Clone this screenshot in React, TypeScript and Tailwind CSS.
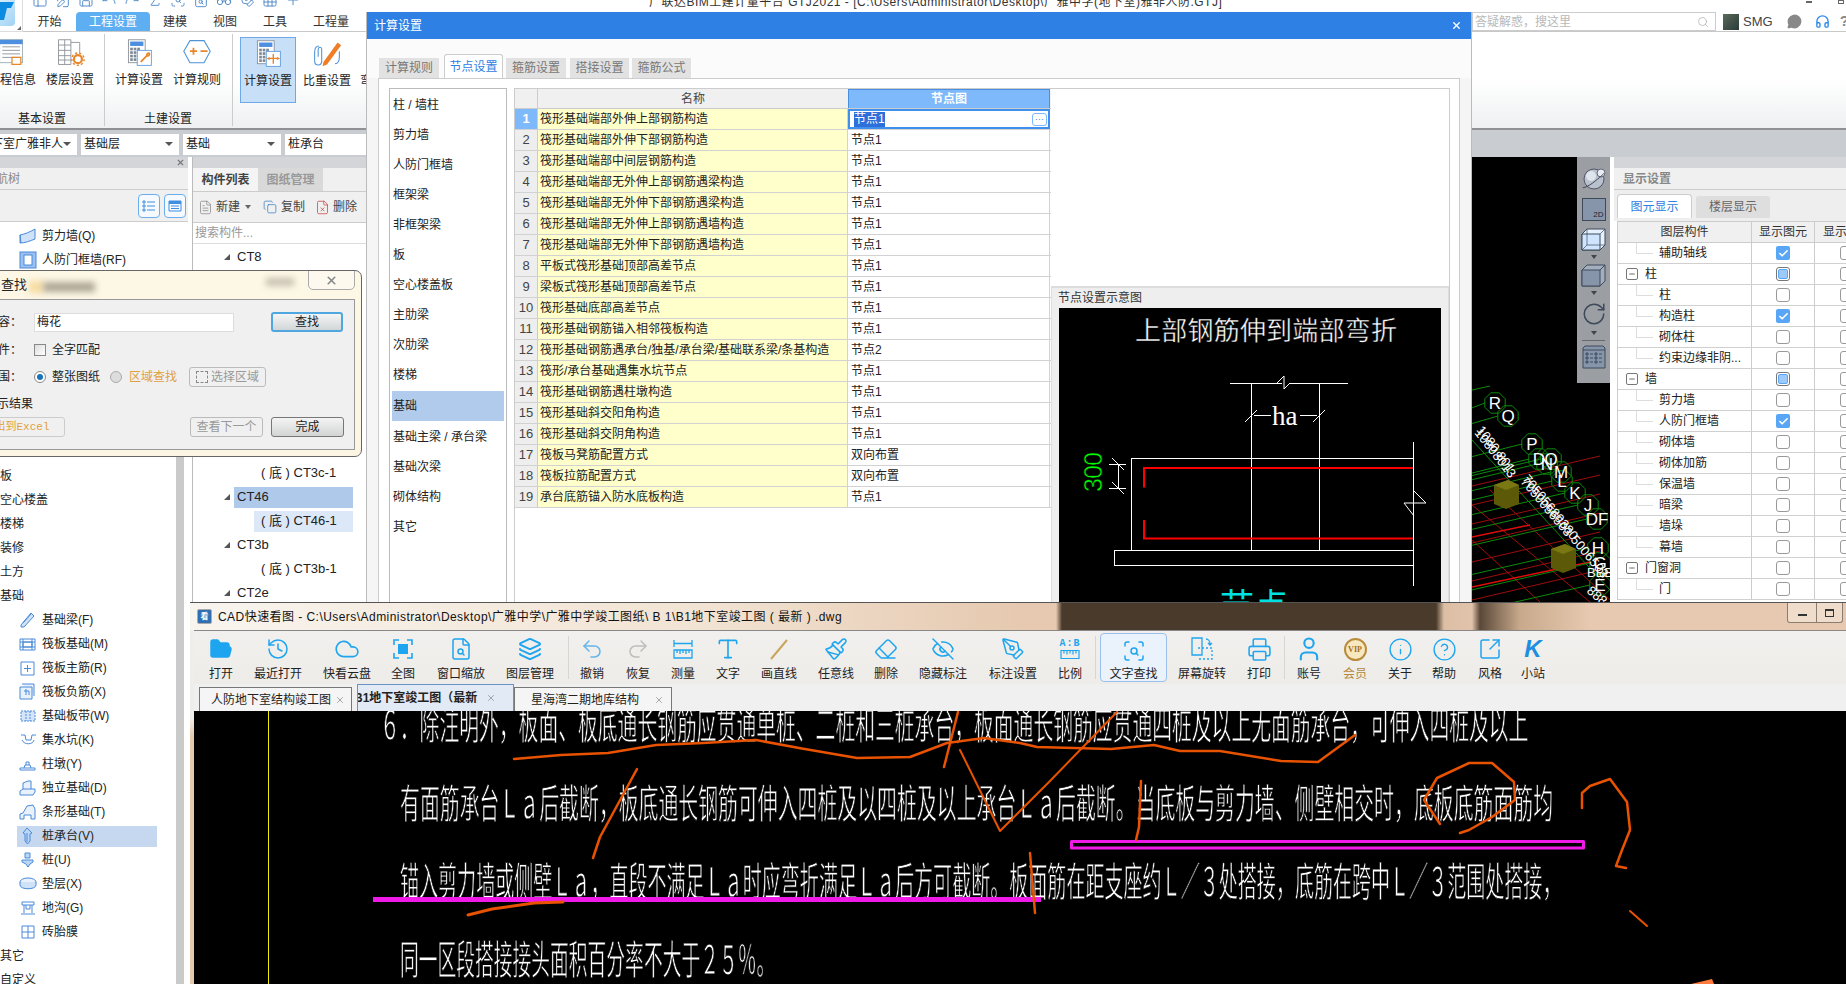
import React from "react";
import {
  FolderOpen, History, Cloud, FileSearch, Layers, Undo2, Redo2, Type, Paintbrush, Eraser, EyeOff, PenTool,
  RotateCw, Printer, User, Info, CircleHelp, SquareArrowOutUpRight, Search, MessageCircleMore, Headphones, Save,
  FilePen, Sigma, ScanSearch, Glasses, Grid3x3, X, FileText, Copy, FileX, Plus, Check, Minus, Table2, Undo, Redo,
} from "lucide-react";

const FONT = "font-['Liberation_Sans','Noto_Sans_CJK_SC',sans-serif]";

const QuickIcons = () => {
  const list = [Table2, FilePen, Save, Undo, Redo, Sigma, ScanSearch, FileSearch, Glasses, PenTool, Grid3x3, Plus];
  return (
    <div className="flex items-center gap-[7px] pl-[32px] -mt-[6px] h-[12px] text-[#4b87c5]">
      {list.map((I, i) => (
        <I key={i} size={16} strokeWidth={1.4} />
      ))}
    </div>
  );
};

const RibbonIcon = ({ kind }: { kind: string }) => {
  if (kind === "info")
    return (
      <svg width="30" height="30" viewBox="0 0 34 34">
        <rect x="3" y="2" width="26" height="26" fill="#fff" stroke="#9aa" />
        <rect x="3" y="2" width="26" height="5" fill="#4c8fe0" />
        {[10, 14, 18, 22].map((y) => <path key={y} d={`M6 ${y}H26`} stroke="#8a8f96" />)}
        <path d="M17 22h10v8h-10z" fill="#fff" stroke="#e8862c" strokeWidth="1.4" />
      </svg>
    );
  if (kind === "floor")
    return (
      <svg width="30" height="30" viewBox="0 0 34 34">
        <path d="M4 2H18V30H4Z M4 8H18 M4 14H18 M4 20H18 M4 25H18 M11 2V30 M18 5H28V17" fill="#fff" stroke="#8a8f96" />
        <circle cx="26" cy="24" r="4.5" fill="none" stroke="#e8862c" strokeWidth="2.5" />
        <circle cx="26" cy="24" r="7" fill="none" stroke="#e8862c" strokeWidth="1.6" strokeDasharray="2.4 2.4" />
      </svg>
    );
  if (kind === "calc" || kind === "calc2")
    return (
      <svg width="30" height="30" viewBox="0 0 34 34">
        <rect x="5" y="2" width="19" height="26" fill="#fff" stroke="#8a8f96" />
        <rect x="7" y="4" width="15" height="5" fill="#4c8fe0" />
        {[11, 15, 19, 23].map((y) => [7, 11, 15].map((x) => <rect key={`${x}${y}`} x={x} y={y} width="3" height="3" fill="#7d8894" />))}
        <rect x="15" y="14" width="16" height="17" fill="#fff" stroke="#5b9be0" />
        {kind === "calc" ? (
          <path d="M19 27l7-7m0 0c-1-2 2-4 3-2m-3 2c2 1 4-2 2-3" stroke="#e8862c" strokeWidth="2" fill="none" />
        ) : (
          <path d="M23 17v11M19 21l-2 1 2 1M27 21l2 1-2 1M19 22h8" stroke="#e8862c" strokeWidth="1.6" fill="none" />
        )}
      </svg>
    );
  if (kind === "rule")
    return (
      <svg width="30" height="30" viewBox="0 0 34 34">
        <path d="M9 3H25L32 15L25 28H9L2 15Z" fill="#fff" stroke="#4f93d8" strokeWidth="1.2" />
        <path d="M9 15h8M13 11v8M21 15h8" stroke="#e8862c" strokeWidth="2" />
      </svg>
    );
  return (
    <svg width="30" height="30" viewBox="0 0 34 34">
      <path d="M8 8C3 8 3 13 3 15V25C3 31 11 31 11 25V12C11 8 7 9 7 12V20" fill="none" stroke="#4f93d8" strokeWidth="1.2" />
      <path d="M26 28C30 28 31 24 31 20V14" fill="none" stroke="#4f93d8" strokeWidth="1.2" />
      <path d="M13 26L29 4L33 7L17 29L12 31Z" fill="#ee7d26" />
    </svg>
  );
};

const RibbonItem = ({ kind, label, w, active, pt = "pt-[3px]" }: { kind: string; label: string; w: string; active?: boolean; pt?: string }) => (
  <div className={`flex flex-col items-center h-[66px] shrink-0 ${pt} ${w} ${active ? "bg-[#c7dff7] border border-[#6ea8e8]" : "border border-transparent"}`}>
    <RibbonIcon kind={kind} />
    <span className="mt-[4px] whitespace-nowrap text-[12px] leading-[16px] text-[#222]">{label}</span>
  </div>
);

const Select = ({ text, w, caret = true }: { text: string; w: string; caret?: boolean }) => (
  <div className={`h-[21px] bg-white flex items-center justify-between pl-[3px] pr-[6px] text-[12px] text-[#222] overflow-hidden whitespace-nowrap shrink-0 ${w}`}>
    <span>{text}</span>
    {caret && <span className="w-0 h-0 border-x-[4px] border-x-transparent border-t-[4px] border-t-[#555]" />}
  </div>
);

const Logo = () => (
  <div className="absolute left-0 top-0 w-[23px] h-[32px] border-r border-b border-[#ddd] bg-white z-10">
    <div className="w-[15px] h-[26px] rounded-br-[4px] bg-[linear-gradient(135deg,#d6ecfb,#9fd3f5)] flex items-start overflow-hidden">
      <svg width="15" height="24" viewBox="0 0 15 24"><path d="M0 2H14L11 8H7L4 20H0Z" fill="#0d8be0" /></svg>
    </div>
    <span className="absolute right-[1px] bottom-[1px] w-0 h-0 border-l-[4px] border-l-transparent border-b-[4px] border-b-[#666]" />
  </div>
);

const Top = () => (
  <div className="relative h-[130px] shrink-0 bg-white">
    <Logo />
    <div className="h-[12px] overflow-hidden flex">
      <QuickIcons />
      <div className="absolute left-[649px] top-[-6px] text-[12px] leading-[16px] whitespace-nowrap text-[#333] tracking-[0.5px]">
        广联达BIM土建计量平台 GTJ2021 - [C:\Users\Administrator\Desktop\广雅中学(地下室)雅非人防.GTJ]
      </div>
      <div className="ml-auto flex gap-[26px] pr-[2px] items-start">
        <span className="w-[6px] h-[2px] mt-[1px] bg-[#666]" />
        <span className="w-[6px] h-[4px] border border-[#666]" />
      </div>
    </div>
    <div className="flex h-[20px] border-b border-[#c8c8c8] pl-[23px] text-[12px] text-[#333]">
      {[
        ["开始", "w-[53px]"],
        ["工程设置", "w-[74px] bg-[#5eaef2] text-white rounded-t-[4px]"],
        ["建模", "w-[50px]"],
        ["视图", "w-[50px]"],
        ["工具", "w-[50px]"],
        ["工程量", "w-[62px]"],
      ].map(([t, c]) => (
        <div key={t} className={`flex items-center justify-center ${c}`}>{t}</div>
      ))}
      <div className="flex-1" />
      <div className="flex items-center h-[19px] -mt-[1px] w-[244px] absolute left-[1472px] top-[13px] border border-[#ccc] bg-white pl-[2px] pr-[6px] text-[12px] text-[#b8b8b8] justify-between">
        <span>答疑解惑，搜这里</span>
        <Search size={12} strokeWidth={1.4} className="text-[#aaa]" />
      </div>
      <div className="absolute left-[1723px] top-[13px] flex items-center h-[17px] text-[13px] text-[#444]">
        <span className="w-[16px] h-[16px] bg-[linear-gradient(135deg,#5a6a5a,#2a3a3a)] mr-[4px]" />
        SMG
        <MessageCircleMore size={15} strokeWidth={2} fill="#888" className="ml-[14px] text-[#888]" />
        <Headphones size={15} strokeWidth={2.2} className="ml-[13px] text-[#2d8ae8]" />
        <span className="ml-[10px] text-[15px] font-bold text-[#888]">?</span>
      </div>
    </div>
    <div className="h-[98px] bg-[linear-gradient(180deg,#fff_0%,#fff_50%,#eef0f1_100%)] border-b-2 border-[#8e9093] flex -ml-[20px] overflow-hidden">
      <div className="w-[125px] shrink-0 border-r border-[#ccc] flex flex-col my-[2px]">
        <div className="flex h-[68px] items-start">
          <RibbonItem kind="info" label="工程信息" w="w-[64px]" />
          <RibbonItem kind="floor" label="楼层设置" w="w-[52px]" />
        </div>
        <div className="text-[12px] text-[#222] text-center mt-[10px]">基本设置</div>
      </div>
      <div className="w-[128px] shrink-0 border-r border-[#ccc] flex flex-col my-[2px] pl-[8px]">
        <div className="flex h-[68px] gap-[6px]">
          <RibbonItem kind="calc" label="计算设置" w="w-[52px]" />
          <RibbonItem kind="rule" label="计算规则" w="w-[52px]" />
        </div>
        <div className="text-[12px] text-[#222] text-center pr-[9px] mt-[10px]">土建设置</div>
      </div>
      <div className="flex mt-[5px] pl-[7px] gap-[5px]">
        <RibbonItem kind="calc2" label="计算设置" w="w-[56px]" pt="pt-[1px]" active />
        <RibbonItem kind="pen" label="比重设置" w="w-[52px]" pt="pt-[1px]" />
        <RibbonItem kind="pen" label="弯钩设置" w="w-[52px]" pt="pt-[1px]" />
      </div>
    </div>
  </div>
);

const SelectorBar = () => (
  <div className="h-[27px] shrink-0 bg-[#c9ccd0] flex items-center gap-[4px] pt-[1px]">
    <Select text="下室广雅非人" w="w-[77px] justify-end" />
    <Select text="基础层" w="w-[98px]" />
    <Select text="基础" w="w-[98px]" />
    <Select text="桩承台" w="w-[120px]" caret={false} />
  </div>
);

const LeftIcon = ({ n }: { n: number }) => {
  const s = "#4a8ad8";
  const p: Record<number, React.ReactNode> = {
    0: <path d="M2 14L12 2l3 3L5 16H2Z M4 12l8-9" fill="#cfe2f8" stroke={s} />,
    1: <path d="M1 4h15v11H1Z M4 7h9v5H4Z M4 4v11 M13 4v11 M1 7h15 M1 12h15" fill="none" stroke={s} />,
    2: <path d="M2 3h13v13H2Z M8.5 6v7 M5 9.5h7" fill="none" stroke={s} />,
    3: <path d="M1 4h12v12H1Z M3 1h12v12 M5 8h5v4 M7 6v6" fill="#e8f1fc" stroke={s} />,
    4: <path d="M2 4h14v10H2Z M7 4v10 M11 4v10" fill="#d5e5f8" stroke={s} strokeDasharray="2 1" />,
    5: <path d="M2 4l4 0 1 5h5l1-5h4 M3 9c2 5 11 5 12 0" fill="none" stroke={s} />,
    6: <path d="M1 13h15v2H1Z M5 13l1-3h5l1 3 M7 10V7h3v3" fill="none" stroke={s} />,
    7: <path d="M1 16V12l3-2V4l5-2h3v8h4v3l-2 3Z M4 10h8" fill="#e8f1fc" stroke={s} />,
    8: <path d="M1 16v-5l3-1L8 3l6-1 2 4v10H12v-4H5v4Z" fill="#e8f1fc" stroke={s} />,
    9: <path d="M8 1l5 5-2 1v7l-2.500 3L6 14V7L4 6Z M8 6v9" fill="#bcd6f5" stroke={s} />,
    10: <path d="M6 2h5v5H6Z M3 9h11v2l-3 2-2 3-2-3-4-2Z" fill="#bcd6f5" stroke={s} />,
    11: <><ellipse cx="9" cy="7" rx="8" ry="4" fill="#e8f1fc" stroke={s} /><path d="M1 7v3c0 5 16 5 16 0V7" fill="#cfe2f8" stroke={s} /></>,
    12: <path d="M3 3h12v3H3Z M5 6v8 M13 6v8 M2 15h14 M7 6v4h4V6" fill="none" stroke={s} />,
    13: <path d="M3 3h12v12H3Z M9 3v12 M3 9h12" fill="none" stroke={s} />,
    14: <path d="M1 8C6 7 11 5 16 2v10C11 14 6 16 1 16Z M1 8l1 8" fill="#cfe2f8" stroke={s} />,
    15: <><rect x="1" y="1" width="16" height="16" fill="#9ac1ef" stroke={s} /><rect x="5" y="4" width="8" height="10" fill="#fff" stroke={s} /></>,
  };
  return <svg width="18" height="18" viewBox="0 0 18 18" className="shrink-0">{p[n]}</svg>;
};

const LeftRow = ({ t, icon, sel, plain }: { t: string; icon?: number; sel?: boolean; plain?: boolean }) => (
  <div className="h-[24px] flex items-center whitespace-nowrap text-[12px] text-[#222]">
    {plain ? (
      <span>{t}</span>
    ) : (
      <div className={`ml-[17px] w-[140px] h-[21px] flex items-center pl-[2px] ${sel ? "bg-[#c6d8f0]" : ""}`}>
        <span className="w-[23px] flex">{icon !== undefined && <LeftIcon n={icon} />}</span>
        <span>{t}</span>
      </div>
    )}
  </div>
);

const LeftPanel = () => (
  <div className="w-[188px] shrink-0 flex flex-col bg-white">
    <div className="h-[11px] bg-[#d3d5d9] flex justify-end items-center pr-[3px]"><X size={9} strokeWidth={3} className="text-[#777]" /></div>
    <div className="h-[22px] bg-[#f0f0f0] border-b border-[#ccc] text-[12px] text-[#888] flex items-center -ml-[4px] whitespace-nowrap">航树</div>
    <div className="h-[32px] bg-[#f0f0f0] border-b border-[#ccc] flex justify-end items-center gap-[4px] pr-[2px]">
      <div className="w-[22px] h-[24px] border border-[#6aaeee] rounded-[4px] bg-[#f6fafe] flex items-center justify-center">
        <svg width="14" height="14" viewBox="0 0 14 14"><path d="M1 2h2v2H1Z M1 6h2v2H1Z M1 10h2v2H1Z M5 3h8 M5 7h8 M5 11h8" fill="none" stroke="#3f8fe0" /></svg>
      </div>
      <div className="w-[22px] h-[24px] border border-[#6aaeee] rounded-[4px] bg-[#f6fafe] flex items-center justify-center">
        <svg width="14" height="14" viewBox="0 0 14 14"><path d="M1 2h12v10H1Z" fill="none" stroke="#3f8fe0" /><path d="M1 2h12v3H1Z" fill="#3f8fe0" /><path d="M3 7h8 M3 9.500h8" stroke="#3f8fe0" /></svg>
      </div>
    </div>
    <div className="flex-1 relative overflow-hidden">
      <div className="pr-[12px] pt-[2px]">
        <LeftRow t="剪力墙(Q)" icon={14} />
        <LeftRow t="人防门框墙(RF)" icon={15} />
        {[0, 1, 2, 3, 4, 5, 6, 7].map((i) => <div key={i} className="h-[24px]" />)}
        <LeftRow t="板" plain />
        <LeftRow t="空心楼盖" plain />
        <LeftRow t="楼梯" plain />
        <LeftRow t="装修" plain />
        <LeftRow t="土方" plain />
        <LeftRow t="基础" plain />
        <LeftRow t="基础梁(F)" icon={0} />
        <LeftRow t="筏板基础(M)" icon={1} />
        <LeftRow t="筏板主筋(R)" icon={2} />
        <LeftRow t="筏板负筋(X)" icon={3} />
        <LeftRow t="基础板带(W)" icon={4} />
        <LeftRow t="集水坑(K)" icon={5} />
        <LeftRow t="柱墩(Y)" icon={6} />
        <LeftRow t="独立基础(D)" icon={7} />
        <LeftRow t="条形基础(T)" icon={8} />
        <LeftRow t="桩承台(V)" icon={9} sel />
        <LeftRow t="桩(U)" icon={10} />
        <LeftRow t="垫层(X)" icon={11} />
        <LeftRow t="地沟(G)" icon={12} />
        <LeftRow t="砖胎膜" icon={13} />
        <LeftRow t="其它" plain />
        <LeftRow t="自定义" plain />
      </div>
      <div className="absolute right-[4px] top-[225px] bottom-0 w-[8px] bg-[#cacaca]" />
    </div>
  </div>
);

const TreeRow = ({ t, child, sel }: { t: string; child?: boolean; sel?: boolean }) => (
  <div className="h-[24px] flex items-center whitespace-nowrap text-[12px] text-[#222]">
    {child ? (
      <div className={`ml-[61px] w-[99px] h-[21px] flex items-center pl-[7px] text-[13px] ${sel ? "bg-[#dce7f7]" : ""}`}>{t}</div>
    ) : (
      <>
        <span className="ml-[31px] w-[10px] flex items-center">
          <span className="w-0 h-0 border-l-[6px] border-l-transparent border-b-[6px] border-b-[#555]" />
        </span>
        <div className={`w-[119px] h-[21px] flex items-center pl-[3px] text-[13px] ${sel ? "bg-[#afc9ea]" : ""}`}>{t}</div>
      </>
    )}
  </div>
);

const MidPanel = () => (
  <div className="w-[186px] shrink-0 flex flex-col bg-white border-l border-[#bbb]">
    <div className="h-[11px] bg-[#d3d5d9]" />
    <div className="h-[24px] bg-[#f0f0f0] border-b border-[#ccc] flex text-[12px]">
      <div className="w-[65px] bg-[#f4f4f4] flex items-center justify-center font-bold text-[#444]">构件列表</div>
      <div className="w-[65px] bg-[#d9d9d9] flex items-center justify-center font-bold text-[#999]">图纸管理</div>
    </div>
    <div className="h-[31px] bg-[#f0f0f0] border-b border-[#ccc] flex items-center text-[12px] text-[#444] pl-[5px]">
      <FileText size={15} strokeWidth={1.2} className="text-[#888]" /><span className="ml-[3px]">新建</span>
      <span className="ml-[5px] w-0 h-0 border-x-[3px] border-x-transparent border-t-[4px] border-t-[#666]" />
      <Copy size={14} strokeWidth={1.3} className="ml-[12px] text-[#3f7fc8]" /><span className="ml-[4px]">复制</span>
      <FileX size={15} strokeWidth={1.2} className="ml-[10px] text-[#c84040]" /><span className="ml-[3px]">删除</span>
    </div>
    <div className="h-[21px] border-b border-[#ddd] pl-[2px] flex items-center text-[12px] text-[#999]">搜索构件...</div>
    <div className="pt-[1px]">
      <TreeRow t="CT8" />
      {[0, 1, 2, 3, 4, 5, 6, 7].map((i) => <div key={i} className="h-[24px]" />)}
      <TreeRow t="( 底 ) CT3c-1" child />
      <TreeRow t="CT46" sel />
      <TreeRow t="( 底 ) CT46-1" child sel />
      <TreeRow t="CT3b" />
      <TreeRow t="( 底 ) CT3b-1" child />
      <TreeRow t="CT2e" />
    </div>
  </div>
);

const FindDialog = () => (
  <div className="absolute left-[-40px] top-[270px] w-[402px] h-[187px] border border-[#666] rounded-[7px] bg-[linear-gradient(180deg,#fdf7e6,#fcf5e3)] overflow-hidden text-[12px] text-[#222] flex flex-col">
    <div className="h-[28px] shrink-0 relative flex items-center pl-[40px] text-[13px]">
      查找
      <span className="absolute left-[68px] top-[10px] w-[14px] h-[12px] bg-[#f8dca0] blur-[3px]" />
      <span className="absolute left-[82px] top-[11px] w-[52px] h-[10px] bg-[#b0a896] blur-[3px]" />
      <span className="absolute left-[305px] top-[7px] w-[28px] h-[8px] bg-[#c8c0b0] blur-[3px]" />
      <div className="absolute right-[6px] top-[-1px] w-[47px] h-[20px] border border-[#aaa] rounded-b-[5px] bg-[#fdf9ee] flex items-center justify-center">
        <X size={13} strokeWidth={3} className="text-[#888]" />
      </div>
    </div>
    <div className="ml-[0px] mr-[6px] h-[151px] border border-[#999] bg-[#f0f0f0] relative pl-[72px] pt-[12px]">
      <div className="flex h-[20px] items-center">
        <span className="absolute left-[10px] w-[50px] text-right whitespace-nowrap">内容：</span>
        <div className="w-[200px] h-[19px] border border-[#ddd] bg-white pl-[2px] flex items-center">梅花</div>
        <div className="ml-[37px] w-[72px] h-[20px] border-2 border-[#4ea7df] rounded-[3px] bg-[linear-gradient(180deg,#f4f4f4,#d2d6d8)] flex items-center justify-center">查找</div>
      </div>
      <div className="flex h-[20px] items-center mt-[8px]">
        <span className="absolute left-[10px] w-[50px] text-right whitespace-nowrap">条件：</span>
        <span className="w-[12px] h-[12px] border border-[#888] bg-[linear-gradient(135deg,#ddd,#fff)]" />
        <span className="ml-[6px]">全字匹配</span>
      </div>
      <div className="flex h-[20px] items-center mt-[7px]">
        <span className="absolute left-[10px] w-[50px] text-right whitespace-nowrap">范围：</span>
        <span className="w-[12px] h-[12px] rounded-full border border-[#888] bg-white flex items-center justify-center"><span className="w-[6px] h-[6px] rounded-full bg-[#1874b8]" /></span>
        <span className="ml-[6px]">整张图纸</span>
        <span className="ml-[10px] w-[12px] h-[12px] rounded-full border border-[#aaa] bg-[#ddd]" />
        <span className="ml-[7px] text-[#e0a040]">区域查找</span>
        <div className="ml-[12px] w-[77px] h-[20px] border border-[#bbb] rounded-[3px] flex items-center justify-center text-[#999]">
          <span className="w-[12px] h-[12px] border border-dashed border-[#888] mr-[3px]" />选择区域
        </div>
      </div>
      <div className="absolute left-[23px] top-[95px] whitespace-nowrap">显示结果</div>
      <div className="absolute left-[0px] top-[117px] w-[103px] h-[20px] border border-[#ccc] rounded-[3px] flex items-center justify-center font-['Liberation_Mono','Noto_Sans_CJK_SC',monospace] text-[#e0a040] text-[11px] pl-[6px]">导出到Excel</div>
      <div className="absolute left-[228px] top-[117px] w-[73px] h-[20px] border border-[#bbb] rounded-[3px] flex items-center justify-center text-[#999]">查看下一个</div>
      <div className="absolute left-[309px] top-[117px] w-[73px] h-[20px] border border-[#777] rounded-[3px] bg-[linear-gradient(180deg,#f4f4f4,#d2d4d4)] flex items-center justify-center">完成</div>
    </div>
  </div>
);

const listItems = ["柱 / 墙柱", "剪力墙", "人防门框墙", "框架梁", "非框架梁", "板", "空心楼盖板", "主肋梁", "次肋梁", "楼梯", "基础", "基础主梁 / 承台梁", "基础次梁", "砌体结构", "其它"];

const rows: [string, string][] = [
  ["筏形基础端部外伸上部钢筋构造", "节点1"],
  ["筏形基础端部外伸下部钢筋构造", "节点1"],
  ["筏形基础端部中间层钢筋构造", "节点1"],
  ["筏形基础端部无外伸上部钢筋遇梁构造", "节点1"],
  ["筏形基础端部无外伸下部钢筋遇梁构造", "节点1"],
  ["筏形基础端部无外伸上部钢筋遇墙构造", "节点1"],
  ["筏形基础端部无外伸下部钢筋遇墙构造", "节点1"],
  ["平板式筏形基础顶部高差节点", "节点1"],
  ["梁板式筏形基础顶部高差节点", "节点1"],
  ["筏形基础底部高差节点", "节点1"],
  ["筏形基础钢筋锚入相邻筏板构造", "节点1"],
  ["筏形基础钢筋遇承台/独基/承台梁/基础联系梁/条基构造", "节点2"],
  ["筏形/承台基础遇集水坑节点", "节点1"],
  ["筏形基础钢筋遇柱墩构造", "节点1"],
  ["筏形基础斜交阳角构造", "节点1"],
  ["筏形基础斜交阴角构造", "节点1"],
  ["筏板马凳筋配置方式", "双向布置"],
  ["筏板拉筋配置方式", "双向布置"],
  ["承台底筋锚入防水底板构造", "节点1"],
];

const NodeTable = () => (
  <div className="w-[536px] shrink-0 text-[12px] text-[#222]">
    <div className="grid grid-cols-[23px_310px_202px] h-[20px] border-b border-[#ccc] bg-[#f0f0f0] text-[#444]">
      <div className="border-r border-[#ccc]" />
      <div className="flex items-center justify-center">名称</div>
      <div className="flex items-center justify-center bg-[#7db9fb] text-white border border-[#4b8fe0] border-b-0 font-bold">节点图</div>
    </div>
    {rows.map(([a, b], i) => (
      <div key={i} className="grid grid-cols-[23px_310px_202px] h-[21px] border-b border-[#d2d2d2]">
        <div className={`flex items-center justify-center border-r border-[#ccc] text-[13px] ${i === 0 ? "bg-[#7db9fb] text-white font-bold" : "bg-[#eeeeee] text-[#444]"}`}>{i + 1}</div>
        <div className="bg-[#ffffcc] border-r border-[#d2d2d2] flex items-center pl-[2px] whitespace-nowrap overflow-hidden">{a}</div>
        {i === 0 ? (
          <div className="border-2 border-[#3f8fef] flex items-center justify-between pl-[4px] pr-[1px]">
            <span className="bg-[#2e6fd9] text-white leading-[15px]">{b}</span>
            <span className="w-[15px] h-[13px] border border-[#7db9fb] rounded-[3px] flex items-center justify-center text-[#3f7fc8] text-[9px] leading-none">···</span>
          </div>
        ) : (
          <div className="border-r border-[#d2d2d2] flex items-center pl-[3px]">{b}</div>
        )}
      </div>
    ))}
  </div>
);

const NodeDiagram = () => (
  <svg viewBox="1059 308 382 294" className="w-[382px] h-[294px] bg-black block shrink-0">
    <g stroke="#fff" strokeWidth="1" fill="none" shapeRendering="crispEdges">
      <path d="M1230 383.500H1282M1289 383.500H1348 M1251.500 383V550 M1319.500 383V550" />
      <path d="M1131.500 458.500H1413.500V550H1131.500Z M1114.500 550.500H1413.500V565.500H1114.500Z M1413.500 442V586" />
      <path d="M1254 415.500H1271 M1300 415.500H1317" />
      <path d="M1109 464.500H1126 M1109 488.500H1126 M1118.500 464V488" />
    </g>
    <g stroke="#fff" strokeWidth="1" fill="none">
      <path d="M1277 383L1284 376 L1284 389 L1290 383 M1245 422L1257 410 M1313 422L1325 410 M1112 458L1124 470 M1112 482L1124 494 M1404 503H1414L1426 503 L1414 491 M1404 503L1414 516" />
    </g>
    <path d="M1144 487.500V468H1413 M1144 520V538.500H1413" stroke="#f00" strokeWidth="2" fill="none" />
    <text x="1135" y="340" fill="#fff" stroke="#000" strokeWidth="0.4" fontSize="26" fontFamily="'Noto Sans CJK SC',sans-serif" textLength="262">上部钢筋伸到端部弯折</text>
    <text x="1272" y="425" fill="#fff" fontSize="27" fontFamily="'Liberation Serif',serif">ha</text>
    <text transform="translate(1102 492) rotate(-90)" fill="#00ff00" stroke="#000" strokeWidth="0.5" fontSize="25" fontFamily="'Liberation Sans',sans-serif" textLength="40">300</text>
    <text x="1220" y="618" fill="#00e0e0" fontSize="34" fontFamily="'Noto Sans CJK SC',sans-serif">节点</text>
  </svg>
);

const CalcDialog = () => (
  <div className="absolute left-[366px] top-[12px] w-[1106px] h-[590px] bg-[#f5f5f5] border-x border-[#bbb] flex flex-col">
    <div className="h-[27px] shrink-0 bg-[#2f80e4] text-white text-[12px] flex items-center justify-between pl-[7px] pr-[9px]">
      <span>计算设置</span>
      <X size={11} strokeWidth={3} />
    </div>
    <div className="h-[15px] shrink-0 bg-[#fbfbfb]" />
    <div className="h-[24px] shrink-0 flex items-end pl-[12px] bg-[#fbfbfb] text-[12px] text-[#777]">
      <div className="w-[60px] h-[20px] bg-[#e2e2e2] flex items-center justify-center">计算规则</div>
      <div className="ml-[5px] w-[59px] h-[24px] bg-white border border-b-0 border-[#ccc] rounded-t-[3px] text-[#2f80e4] flex items-center justify-center">节点设置</div>
      <div className="ml-[3px] w-[60px] h-[20px] bg-[#e2e2e2] flex items-center justify-center">箍筋设置</div>
      <div className="ml-[4px] w-[59px] h-[20px] bg-[#e2e2e2] flex items-center justify-center">搭接设置</div>
      <div className="ml-[3px] w-[59px] h-[20px] bg-[#e2e2e2] flex items-center justify-center">箍筋公式</div>
    </div>
    <div className="ml-[11px] mr-[11px] flex-1 bg-white border border-b-0 border-[#ccc] flex pl-[10px] pt-[9px] pr-[9px] gap-[7px] min-h-0">
      <div className="w-[118px] shrink-0 border border-[#bbb] border-b-0 pt-[1px] px-[2px] text-[12px] text-[#222]">
        {listItems.map((t) => (
          <div key={t} className={`h-[30px] flex items-center pl-[1px] whitespace-nowrap ${t === "基础" ? "bg-[#b0cbeb] h-[28px] my-[1px]" : ""}`}>{t}</div>
        ))}
      </div>
      <div className="flex-1 border border-[#ccc] border-b-0 flex min-w-0">
        <NodeTable />
        <div className="flex-1 flex flex-col min-w-0">
          <div className="h-[197px] shrink-0" />
          <div className="flex-1 bg-[#eeeeee] border-t-2 border-x border-[#ddd] pl-[7px] overflow-hidden">
            <div className="h-[20px] text-[12px] text-[#333] flex items-center -ml-[1px]">节点设置示意图</div>
            <NodeDiagram />
          </div>
        </div>
      </div>
    </div>
  </div>
);

const Octa = ({ x, y, r = 11 }: { x: number; y: number; r?: number }) => {
  const pts = Array.from({ length: 8 }, (_, i) => {
    const a = ((i + 0.5) * Math.PI) / 4;
    return `${(x + r * Math.cos(a)).toFixed(1)},${(y + r * Math.sin(a)).toFixed(1)}`;
  }).join(" ");
  return <polygon points={pts} fill="none" stroke="#0c8a0c" strokeWidth="1" />;
};

const axis: [string, number, number][] = [
  ["R", 1495, 403], ["Q", 1508, 416], ["P", 1532, 444], ["D", 1539, 459], ["O", 1551, 459], ["N", 1547, 464], ["M", 1561, 472], ["L", 1562, 481],
  ["K", 1575, 493], ["J", 1588, 505], ["DF", 1597, 519], ["H", 1598, 548], ["G", 1600, 563], ["E", 1600, 585],
];

const Canvas3D = () => (
  <svg viewBox="1472 383 138 219" className="absolute left-0 top-[226px] w-[138px] h-[219px]">
    <g stroke="#a00c0c" strokeWidth="1">
      {[0, 1, 2, 3, 4, 5, 6].map((i) => <line key={i} x1="1472" y1={486 + i * 19} x2="1600" y2={456 + i * 19} />)}
      <path d="M1490 490L1610 600 M1472 505L1590 602 M1472 540L1540 602" fill="none" />
    </g>
    <g stroke="#e00c0c" strokeWidth="1.500"><path d="M1472 537L1530 525 M1472 587L1590 562" /></g>
    <g stroke="#0c8a0c" strokeWidth="1">
      {axis.map(([n, x, y]) => <line key={n + x} x1={1472} y1={y + (x - 1472) * 0.21} x2={x - 10} y2={y} />)}
      <path d="M1472 390L1490 386 M1472 440L1610 590" fill="none" />
    </g>
    {axis.map(([n, x, y]) => <Octa key={n + "o"} x={x} y={y} />)}
    <g fill="#fff" fontSize="17" fontFamily="'Liberation Sans',sans-serif">
      {axis.map(([n, x, y]) => <text key={n + "t"} x={x} y={y + 6} textAnchor="middle">{n}</text>)}
    </g>
    <g fill="#fff" fontSize="13" fontFamily="'Liberation Sans',sans-serif">
      <text transform="translate(1474 433) rotate(52)">10808013</text>
      <text transform="translate(1476 430) rotate(53)">1080 801</text>
      <text transform="translate(1520 482) rotate(50)">7050056503</text>
      <text transform="translate(1522 479) rotate(51)">70505680380</text>
      <text transform="translate(1570 540) rotate(50)">5006503</text>
      <text transform="translate(1587 577)">BBB</text>
      <text transform="translate(1586 592) rotate(40)">888</text>
    </g>
    <g>
      <path d="M1494 485l14-5 11 5v19l-13 5-12-5Z" fill="#5c5a08" />
      <path d="M1494 485l14-5 11 5-13 5Z" fill="#7a7812" />
      <path d="M1551 549l14-5 11 5v19l-13 5-12-5Z" fill="#5c5a08" />
      <path d="M1551 549l14-5 11 5-13 5Z" fill="#7a7812" />
    </g>
  </svg>
);

const ToolBtn = ({ children }: { children: React.ReactNode }) => <div className="flex justify-center">{children}</div>;
const Caret = () => <span className="w-0 h-0 mx-auto my-[3px] border-x-[3px] border-x-transparent border-t-[4px] border-t-[#444] block" />;

const CanvasStrip = () => (
  <div className="absolute right-0 top-0 w-[33px] h-[226px] bg-[#9b9ea3] flex flex-col pt-[10px] gap-[1px]">
    <ToolBtn>
      <svg width="26" height="24" viewBox="0 0 26 24"><circle cx="13" cy="12" r="10" fill="#b8c2cf" stroke="#556" /><circle cx="10" cy="9" r="5" fill="#dfe5ec" /><circle cx="20" cy="6" r="4" fill="#e8edf4" stroke="#667" /><path d="M2 20C1 22 8 19 13 15S23 7 23 6" stroke="#445" fill="none" /></svg>
    </ToolBtn>
    <ToolBtn>
      <div className="mt-[6px] w-[24px] h-[23px] bg-[#8795aa] border border-[#3e4a5a] flex items-end justify-end text-[8px] leading-[10px] pr-[1px] text-[#1c2430]">2D</div>
    </ToolBtn>
    <ToolBtn>
      <svg className="mt-[5px]" width="26" height="24" viewBox="0 0 26 24"><path d="M1 7l5-5h18v16l-5 5H1Z" fill="#e6f1ff" stroke="#3e4a5a" /><path d="M1 7h18v16H1Z" fill="#cfe5ff" stroke="#3e4a5a" /><path d="M19 7l5-5 M6 2v16h18 M6 18l-5 5" fill="none" stroke="#3e4a5a" strokeWidth="0.7" /></svg>
    </ToolBtn>
    <Caret />
    <ToolBtn>
      <svg width="26" height="24" viewBox="0 0 26 24"><path d="M1 7l5-5h18v16l-5 5H1Z" fill="#a3aebf" stroke="#3e4a5a" /><path d="M1 7h18v16H1Z" fill="#8795aa" stroke="#3e4a5a" /><path d="M19 7l5-5" stroke="#3e4a5a" /></svg>
    </ToolBtn>
    <Caret />
    <ToolBtn>
      <RotateCw size={26} strokeWidth={1.4} className="text-[#3e4a5a] mt-[2px]" />
    </ToolBtn>
    <Caret />
    <div className="mx-[5px] mt-[1px] h-px bg-[#666a70]" />
    <ToolBtn>
      <svg className="mt-[3px]" width="24" height="24" viewBox="0 0 24 24"><path d="M1 3l2-2h18l2 2v20H1Z" fill="#8795aa" stroke="#3e4a5a" /><path d="M4 8h2v2H4Z M4 12h2v2H4Z M4 16h2v2H4Z M8 9h3 M8 13h3 M8 17h3 M13 8h2v2h-2Z M13 12h2v2h-2Z M13 16h2v2h-2Z M17 9h3 M17 13h3 M17 17h3 M1 5h22" stroke="#2e3a4a" fill="none" strokeWidth="0.8" /></svg>
    </ToolBtn>
  </div>
);

const Cb = ({ s }: { s: number }) =>
  s === 1 ? (
    <span className="w-[14px] h-[14px] rounded-[2px] bg-[#5aa6f6] flex items-center justify-center"><Check size={11} strokeWidth={3.5} className="text-white" /></span>
  ) : s === 2 ? (
    <span className="w-[14px] h-[14px] rounded-[3px] border border-[#777] flex items-center justify-center"><span className="w-[10px] h-[10px] rounded-[2px] bg-[#9dc9fb] border border-[#5aa6f6]" /></span>
  ) : (
    <span className="w-[14px] h-[14px] rounded-[3px] border border-[#999] bg-white" />
  );

const layerRows: [string, number, number][] = [
  ["辅助轴线", 0, 1], ["柱", 1, 2], ["柱", 0, 0], ["构造柱", 0, 1], ["砌体柱", 0, 0], ["约束边缘非阴...", 0, 0], ["墙", 1, 2], ["剪力墙", 0, 0], ["人防门框墙", 0, 1],
  ["砌体墙", 0, 0], ["砌体加筋", 0, 0], ["保温墙", 0, 0], ["暗梁", 0, 0], ["墙垛", 0, 0], ["幕墙", 0, 0], ["门窗洞", 1, 0], ["门", 0, 0],
];

const RightPanel = () => (
  <div className="w-[236px] shrink-0 flex flex-col bg-white overflow-hidden text-[12px] text-[#222] border-l-[4px] border-white">
    <div className="h-[11px] bg-[#d3d5d9] shrink-0" />
    <div className="h-[22px] bg-[#f0f0f0] border-b border-[#ccc] shrink-0 flex items-center pl-[9px] font-bold text-[#888]">显示设置</div>
    <div className="h-[28px] bg-[#eeeeee] shrink-0 flex items-end pl-[3px] gap-[4px]">
      <div className="w-[75px] h-[24px] bg-white border border-b-0 border-[#ccc] rounded-t-[4px] flex items-center justify-center text-[#2f80e4]">图元显示</div>
      <div className="w-[74px] h-[22px] bg-[#dedede] rounded-t-[3px] flex items-center justify-center text-[#666]">楼层显示</div>
    </div>
    <div className="h-[3px] bg-[#eeeeee] shrink-0" />
    <div className="ml-[3px] border-l border-t border-[#ccc] w-[280px] shrink-0">
      <div className="grid grid-cols-[134px_63px_83px] h-[21px] bg-[#f0f0f0] border-b border-[#ccc] text-[#333]">
        <div className="flex items-center justify-center border-r border-[#ccc]">图层构件</div>
        <div className="flex items-center justify-center border-r border-[#ccc]">显示图元</div>
        <div className="flex items-center pl-[8px]">显示名称</div>
      </div>
      {layerRows.map(([t, g, s], i) => (
        <div key={i} className="grid grid-cols-[134px_63px_83px] h-[21px] border-b border-[#d0d0d0]">
          <div className="flex items-center border-r border-[#ccc] relative pl-[8px]">
            {g ? (
              <>
                <span className="w-[12px] h-[12px] border border-[#777] rounded-[2px] flex items-center justify-center"><Minus size={8} strokeWidth={2} /></span>
                <span className="ml-[7px] whitespace-nowrap">{t}</span>
              </>
            ) : (
              <>
                <span className="absolute left-[18px] top-0 bottom-1/2 border-l border-[#ddd]" />
                <span className="ml-[10px] w-[17px] border-t border-[#ddd]" />
                <span className="ml-[6px] whitespace-nowrap">{t}</span>
              </>
            )}
          </div>
          <div className="flex items-center justify-center border-r border-[#ccc]"><Cb s={s} /></div>
          <div className="flex items-center pl-[25px]"><Cb s={0} /></div>
        </div>
      ))}
    </div>
  </div>
);

const GTJ = () => (
  <div className="absolute inset-0 flex flex-col bg-white">
    <Top />
    <SelectorBar />
    <div className="flex flex-1 min-h-0">
      <LeftPanel />
      <div className="w-[4px] bg-white shrink-0" />
      <MidPanel />
      <div className="flex-1 bg-black relative overflow-hidden">
        <div className="absolute left-[1094px] top-0 w-[138px] h-full">
          <Canvas3D />
          <CanvasStrip />
        </div>
      </div>
      <RightPanel />
    </div>
  </div>
);

const RulerBar = () => <path d="M3 13h18v8H3Z M6 13v3 M9 13v4 M12 13v3 M15 13v4 M18 13v3" />;

const CadIcon = ({ k }: { k: string }) => {
  const c = "text-[#1ea5ef]";
  const sw = 1.5;
  switch (k) {
    case "打开": return <FolderOpen size={24} strokeWidth={sw} fill="#1ea5ef" className={c} />;
    case "最近打开": return <History size={24} strokeWidth={sw} className={c} />;
    case "快看云盘": return <Cloud size={26} strokeWidth={sw} className={c} />;
    case "全图": return (
      <svg width="24" height="24" viewBox="0 0 24 24" fill="none" stroke="#1ea5ef" strokeWidth="1.6"><path d="M3 8V3h5 M16 3h5v5 M21 16v5h-5 M8 21H3v-5" /><rect x="7" y="7" width="10" height="10" fill="#1ea5ef" stroke="none" /></svg>
    );
    case "窗口缩放": return <FileSearch size={24} strokeWidth={sw} className={c} />;
    case "图层管理": return <Layers size={24} strokeWidth={2} className={c} />;
    case "撤销": return <Undo2 size={24} strokeWidth={sw} className="text-[#63b7ea]" />;
    case "恢复": return <Redo2 size={24} strokeWidth={sw} className="text-[#bdbdbd]" />;
    case "测量": return (
      <svg width="26" height="24" viewBox="0 0 24 24" fill="none" stroke="#1ea5ef" strokeWidth="1.3"><path d="M3 3v7 M21 3v7 M3 6.500h18" /><RulerBar /></svg>
    );
    case "文字": return <Type size={26} strokeWidth={sw} className={c} />;
    case "画直线": return <svg width="24" height="24" viewBox="0 0 24 24"><path d="M4 22L20 3" stroke="#c9a45a" strokeWidth="2" /></svg>;
    case "任意线": return <Paintbrush size={24} strokeWidth={sw} className={c} />;
    case "删除": return <Eraser size={24} strokeWidth={sw} className={c} />;
    case "隐藏标注": return <EyeOff size={24} strokeWidth={sw} className={c} />;
    case "标注设置": return <PenTool size={24} strokeWidth={sw} className={c} />;
    case "比例": return (
      <div className="flex flex-col items-center text-[#1ea5ef] font-bold text-[10px] leading-[11px] font-['Liberation_Mono',monospace] tracking-[1px]">
        <span>A:B</span>
        <svg width="24" height="11" viewBox="0 12 24 10" fill="none" stroke="#1ea5ef" strokeWidth="1.2"><RulerBar /></svg>
      </div>
    );
    case "文字查找": return <ScanSearch size={24} strokeWidth={sw} className={c} />;
    case "屏幕旋转": return <svg width="24" height="26" viewBox="0 0 24 26" fill="none" stroke="#1ea5ef" strokeWidth="1.300"><path d="M2 2h10v17H2Z" /><path d="M8 12h14v11H8" strokeDasharray="2 2" /><path d="M16 3c2 0 4 2 4 5m-2-1l2 2 2-2" /></svg>;
    case "打印": return <Printer size={25} strokeWidth={sw} className={c} />;
    case "账号": return <User size={28} strokeWidth={1.8} className={c} />;
    case "会员": return (
      <div className="w-[23px] h-[23px] mt-[1px] rounded-full border-2 border-[#b98c3c] bg-[#f8e8c0] flex items-center justify-center text-[8px] font-bold text-[#a36f1b] font-['Liberation_Serif',serif]">VIP</div>
    );
    case "关于": return <Info size={25} strokeWidth={1.3} className={c} />;
    case "帮助": return <CircleHelp size={25} strokeWidth={1.3} className={c} />;
    case "风格": return <SquareArrowOutUpRight size={24} strokeWidth={sw} className={c} />;
    default: return <span className="text-[24px] leading-[26px] font-bold italic text-[#1e8fe0] font-['Liberation_Sans',sans-serif]">K</span>;
  }
};

const tools: (string | [string, string])[] = [
  ["打开", "w-[54px]"], ["最近打开", "w-[60px]"], ["快看云盘", "w-[78px]"], ["全图", "w-[34px]"], ["窗口缩放", "w-[82px]"], ["图层管理", "w-[56px]"],
  "ml-[10px]",
  ["撤销", "w-[46px]"], ["恢复", "w-[46px]"], ["测量", "w-[44px]"], ["文字", "w-[46px]"], ["画直线", "w-[56px]"], ["任意线", "w-[58px]"], ["删除", "w-[42px]"], ["隐藏标注", "w-[72px]"], ["标注设置", "w-[68px]"], ["比例", "w-[46px]"],
  "ml-[2px]",
  ["文字查找", "w-[67px] ml-[4px]"], ["屏幕旋转", "w-[70px]"], ["打印", "w-[44px]"],
  "ml-[3px]",
  ["账号", "w-[48px]"], ["会员", "w-[44px]"], ["关于", "w-[46px]"], ["帮助", "w-[42px]"], ["风格", "w-[50px]"], ["小站", "w-[36px]"],
];

const CAD_LINE = "absolute whitespace-nowrap origin-left text-[40px] leading-[40px] text-white font-['Noto_Sans_CJK_SC',sans-serif] [font-feature-settings:'fwid'] [-webkit-text-stroke:0.8px_#000]";

const CadWindow = () => (
  <div className="absolute left-[190px] top-[602px] w-[1656px] h-[382px] flex flex-col border-t border-[#555] bg-[linear-gradient(180deg,#f0eeea_0%,#f0eeea_30%,#e5c8ae_35%,#e5c8ae_100%)] pl-[4px]">
    <div className="h-[27px] shrink-0 -ml-[4px] bg-[linear-gradient(90deg,#f8f4ee_0px,#f2e4d4_500px,#e6c9b0_830px,#e6c9b0_866px,#4a3a2b_872px,#4a3a2b_1246px,#dcbfa5_1254px,#e0c3aa_1282px,#5a4838_1290px,#c8a98c_1330px,#e6c9b0_1400px,#e6c9b0_100%)] flex items-center pl-[7px] relative">
      <span className="w-[15px] h-[15px] rounded-[2px] bg-[#2f6fb2] border border-[#aaa] flex items-center justify-center text-[8px] text-white font-bold">看</span>
      <span className="ml-[6px] text-[12px] text-[#111] whitespace-nowrap tracking-[0.45px]">CAD快速看图 - C:\Users\Administrator\Desktop\广雅中学\广雅中学竣工图纸\ B 1\B1地下室竣工图 ( 最新 ) .dwg</span>
      <div className="absolute right-[3px] top-0 h-[20px] flex border border-t-0 border-[#8a7d70] rounded-b-[3px] bg-[#f0dcca]">
        <div className="w-[28px] flex items-center justify-center"><span className="w-[9px] h-[2px] bg-[#333] mt-[5px]" /></div>
        <div className="w-[26px] flex items-center justify-center border-l border-[#8a7d70]"><span className="w-[9px] h-[8px] border border-[#333] border-t-2" /></div>
      </div>
    </div>
    <div className="h-[54px] shrink-0 bg-[linear-gradient(180deg,#f1f0ee,#eeece8)] border-t border-[#888] flex text-[12px] text-[#222]">
      {tools.map((t, i) =>
        typeof t === "string" ? (
          <div key={i} className={`w-px my-[5px] bg-[#d6d6d6] shrink-0 ${t}`} />
        ) : (
          <div key={t[0]} className={`shrink-0 flex flex-col items-center pt-[4px] whitespace-nowrap ${t[1]} ${t[0] === "文字查找" ? "bg-[#eaf2fc] border border-[#9cc0ee] rounded-[4px] my-[2px] pt-[2px]" : ""} ${t[0] === "会员" ? "text-[#b5893a]" : ""}`}>
            <div className="h-[28px] flex items-center justify-center"><CadIcon k={t[0]} /></div>
            <span className="mt-[4px] leading-[14px]">{t[0]}</span>
          </div>
        ),
      )}
    </div>
    <div className="h-[27px] shrink-0 bg-[#f0f0f0] flex items-end pl-[5px] text-[12px] text-[#222]">
      <div className="w-[153px] h-[24px] bg-[#f5f5f5] border border-b-0 border-[#777] flex items-center pl-[11px] whitespace-nowrap">
        人防地下室结构竣工图<X size={10} strokeWidth={1.5} className="ml-[4px] text-[#777]" />
      </div>
      <div className="ml-[5px] w-[157px] h-[27px] bg-[#e2eaf5] border border-b-0 border-[#6a92c4] flex items-center font-bold overflow-hidden">
        <span className="-ml-[4px] w-[124px] overflow-hidden whitespace-nowrap shrink-0">B1地下室竣工图（最新）</span><X size={10} strokeWidth={1.5} className="ml-[8px] text-[#777] shrink-0" />
      </div>
      <div className="w-[158px] h-[24px] bg-[#f5f5f5] border border-b-0 border-[#777] flex items-center pl-[16px] whitespace-nowrap">
        星海湾二期地库结构<X size={10} strokeWidth={1.5} className="ml-[15px] text-[#777]" />
      </div>
    </div>
    <div className="flex-1 bg-black relative overflow-hidden">
      <div className="absolute left-[74px] top-0 bottom-0 w-px bg-[#f0f000]" />
      <div className={`${CAD_LINE} left-[186px] top-[-9px] scale-x-[0.495]`}>6.除注明外,板面、板底通长钢筋应贯通单桩、二桩和三桩承台,板面通长钢筋应贯通四桩及以上无面筋承台,可伸入四桩及以上</div>
      <div className={`${CAD_LINE} left-[206px] top-[70px] scale-x-[0.497]`}>有面筋承台La后截断,板底通长钢筋可伸入四桩及以四桩及以上承台La后截断。当底板与剪力墙、侧壁相交时,底板底筋面筋均</div>
      <div className={`${CAD_LINE} left-[206px] top-[148px] scale-x-[0.476]`}>锚入剪力墙或侧壁La,直段不满足La时应弯折满足La后方可截断。板面筋在距支座约L/3处搭接,底筋在跨中L/3范围处搭接,</div>
      <div className={`${CAD_LINE} left-[206px] top-[226px] scale-x-[0.469]`}>同一区段搭接接头面积百分率不大于25%。</div>
      <svg viewBox="194 711 1652 273" className="absolute inset-0 w-[1652px] h-[273px]" fill="none" strokeLinejoin="round" strokeLinecap="round">
        <path d="M373 899.500H1041" stroke="#f01ae8" strokeWidth="5" strokeLinecap="butt" />
        <rect x="1071.500" y="841.500" width="512" height="6.500" stroke="#f01ae8" strokeWidth="3" />
        <g stroke="#e85200" strokeWidth="2.500">
          <path d="M514 759L561 755L608 753L656 745L703 743L756 740L799 748L857 758L910 757L947 743L984 738L1020 743L1037 747L1111 749L1154 745L1180 751L1220 751L1281 761L1318 762L1355 735" />
          <path d="M958 712L944 767" />
          <path d="M960 750L1000 831L1016 815L1048 783L1082 748L1117 712" strokeWidth="2" />
          <path d="M637 769L600 837L593 858" />
          <path d="M468 915L492 909L534 903L563 902" strokeWidth="3" />
          <path d="M1141 781L1139 827L1136 840" />
          <path d="M1030 853L1035 913" />
          <path d="M1440 824L1424 800L1437 778L1469 763L1492 763L1514 782L1515 800L1492 817L1469 830L1460 833" />
          <path d="M1582 808V793L1590 786L1610 779L1627 802L1630 830L1622 850L1616 866L1626 868" />
          <path d="M1630 911L1647 926" strokeWidth="2" />
        </g>
        <path d="M1691 984L1712 979L1714 984Z" fill="#ff7a3c" />
      </svg>
    </div>
  </div>
);

export default function App() {
  return (
    <div className={`relative w-[1846px] h-[984px] overflow-hidden bg-white ${FONT}`}>
      <GTJ />
      <CalcDialog />
      <FindDialog />
      <CadWindow />
    </div>
  );
}
